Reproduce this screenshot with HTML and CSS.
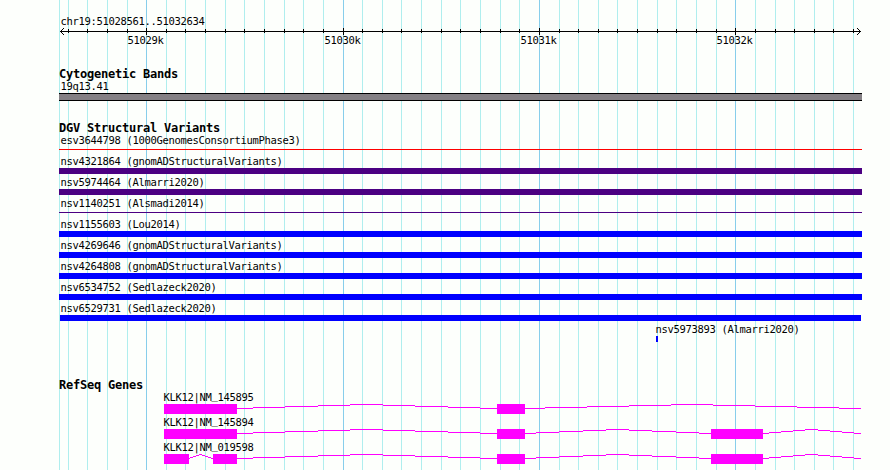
FILE: index.html
```
<!DOCTYPE html>
<html lang="en">
<head>
<meta charset="utf-8">
<title>Genome browser</title>
<link rel="stylesheet" href="styles.css">
</head>
<body>
<svg class="grid" width="890" height="470"></svg>
<main class="tracks">
  <header class="overview">
    <div class="label">chr19:51028561..51032634</div>
    <svg class="ruler" width="803" height="18" viewBox="59 28 803 18"></svg>
  </header>
  <section class="cytobands">
    <h2 class="title">Cytogenetic Bands</h2>
    <div class="label">19q13.41</div>
    <div class="band"></div>
  </section>
  <section class="variants">
    <h2 class="title">DGV Structural Variants</h2>
    <div class="row"><div class="label">esv3644798 (1000GenomesConsortiumPhase3)</div><div class="bar thin red"></div></div>
    <div class="row"><div class="label">nsv4321864 (gnomADStructuralVariants)</div><div class="bar indigo"></div></div>
    <div class="row"><div class="label">nsv5974464 (Almarri2020)</div><div class="bar indigo"></div></div>
    <div class="row"><div class="label">nsv1140251 (Alsmadi2014)</div><div class="bar thin indigo"></div></div>
    <div class="row"><div class="label">nsv1155603 (Lou2014)</div><div class="bar blue"></div></div>
    <div class="row"><div class="label">nsv4269646 (gnomADStructuralVariants)</div><div class="bar blue"></div></div>
    <div class="row"><div class="label">nsv4264808 (gnomADStructuralVariants)</div><div class="bar blue"></div></div>
    <div class="row"><div class="label">nsv6534752 (Sedlazeck2020)</div><div class="bar blue"></div></div>
    <div class="row"><div class="label">nsv6529731 (Sedlazeck2020)</div><div class="bar blue inset"></div></div>
    <div class="row short"><div class="label">nsv5973893 (Almarri2020)</div><div class="bar blue"></div></div>
  </section>
  <section class="genes">
    <h2 class="title">RefSeq Genes</h2>
  </section>
</main>
<script src="tracks.js"></script>
</body>
</html>
```
FILE: styles.css
```
body { margin: 0; height: 470px; background: #fdfffc; overflow: hidden; }
svg { display: block; shape-rendering: crispEdges; }
.grid { position: absolute; inset: 0; z-index: -1; }
.tracks { display: flow-root; width: 803px; margin-left: 59px; color: #000; }
.overview { margin-top: 15px; height: 31px; }
.label, .tick {
  font: 10.5px/13px "DejaVu Sans Mono", monospace;
  letter-spacing: calc(6px - 1ch);
}
.label { height: 13px; padding-left: 1.5px; white-space: pre; }
.title {
  height: 13px;
  margin: 0;
  font: bold 12px/14px "DejaVu Sans Mono", monospace;
  letter-spacing: calc(7px - 1ch);
  white-space: pre;
}
.cytobands { margin-top: 21px; }
.band { box-sizing: border-box; height: 8px; border: solid #000; border-width: 1px 0; background: #848084; }
.variants { margin-top: 20px; }
.row { height: 21px; }
.bar { height: 6px; }
.bar.thin { height: 1px; margin-top: 2px; }
.bar.inset { margin: 0 1px; }
.row.short { margin-left: 595px; }
.row.short .bar { width: 2px; margin-left: 2px; }
.genes { margin-top: 34px; }
.gene-row { height: 25px; }
.gene-row .label { padding-left: 104.5px; }
.underscore { position: relative; top: -2px; }
.red { background: #f00; }
.indigo { background: #4b0082; }
.blue { background: #00f; }
.minor { fill: #afeeee; }
.major { fill: #87ceeb; }
.ink { fill: #000; }
.gene { fill: #f0f; }
```
FILE: tracks.js
```
const svgNode = (parent, tag, cls, attrs) => {
  const node = document.createElementNS('http://www.w3.org/2000/svg', tag);
  if (cls) node.setAttribute('class', cls);
  for (const key in attrs) node.setAttribute(key, attrs[key]);
  parent.append(node);
  return node;
};
const rect = (parent, cls, x, y, width, height) => svgNode(parent, 'rect', cls, { x, y, width, height });

// Scale grid, one line every 100 bases
const ticks = [68,87,107,127,146,166,185,205,225,244,264,284,303,323,343,362,382,401,421,441,460,480,500,519,539,559,578,598,617,637,657,676,696,716,735,755,775,794,814,833,853];
const majors = [146, 343, 539, 735];
const grid = document.querySelector('.grid');
rect(grid, 'minor', 59, 0, 1, 470);
ticks.forEach(x => rect(grid, majors.includes(x) ? 'major' : 'minor', x, 0, 1, 470));

const ruler = document.querySelector('.ruler');
rect(ruler, 'ink', 60, 31, 801, 1);
ticks.forEach(x => majors.includes(x) ? rect(ruler, 'ink', x, 28, 1, 7) : rect(ruler, 'ink', x, 29, 1, 4));
for (let i = 1; i < 4; i++) {
  [31 - i, 31 + i].forEach(y => { rect(ruler, 'ink', 60 + i, y, 1, 1); rect(ruler, 'ink', 860 - i, y, 1, 1); });
}
majors.forEach((x, i) => {
  svgNode(ruler, 'text', 'tick', { x: [127.5, 324.5, 520.5, 716.5][i], y: 44 }).textContent = 51029 + i + 'k';
});

// Intron steps: [x start, x end, rise above the exon midline]
const first = [[237,253,0],[253,285,1],[285,318,2],[318,350,3],[350,383,4],[383,415,3],[415,448,2],[448,480,1],[480,497,0]];
const longTail = [[525,545,0],[545,587,1],[587,629,2],[629,671,3],[671,713,4],[713,755,3],[755,797,2],[797,839,1],[839,861,0]];
const shortTail = [[525,536,0],[536,559,1],[559,583,2],[583,606,3],[606,629,4],[629,652,3],[652,676,2],[676,699,1],[699,711,0],[763,769,0],[769,781,1],[781,793,2],[793,805,3],[805,818,4],[818,830,3],[830,842,2],[842,854,1],[854,861,0]];
const spliced = [[189,190,0],[190,193,1],[193,196,2],[196,199,3],[199,202,4],[202,205,3],[205,208,2],[208,211,1],[211,213,0]];
[
  ['145895', [[164,73],[497,28]], first.concat(longTail)],
  ['145894', [[164,73],[497,28],[711,52]], first.concat(shortTail)],
  ['019598', [[164,25],[213,24],[497,28],[711,52]], first.concat(shortTail, spliced)]
].forEach(([accession, exons, introns]) => {
  const row = document.createElement('div');
  row.className = 'gene-row';
  row.innerHTML = `<div class="label">KLK12|NM<span class="underscore">_</span>${accession}</div>`;
  const svg = svgNode(row, 'svg', '', { width: 803, height: 12, viewBox: '59 0 803 12' });
  introns.forEach(([a, b, rise]) => rect(svg, 'gene', a, 4 - rise, b - a, 1));
  exons.forEach(([x, width]) => rect(svg, 'gene', x, 0, width, 10));
  document.querySelector('.genes').append(row);
});
```
